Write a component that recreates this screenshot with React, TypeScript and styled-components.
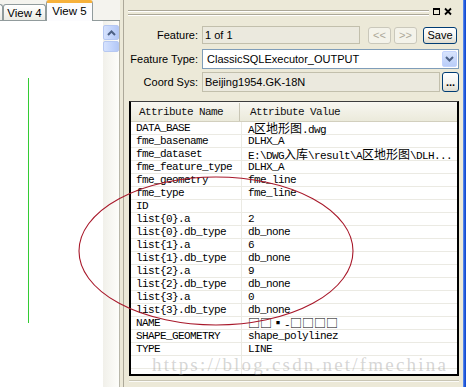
import React from "react";
import styled, { createGlobalStyle } from "styled-components";

const GlobalStyle = createGlobalStyle`
  html, body { margin: 0; padding: 0; background: #ece9d8; }
  body { width: 466px; height: 387px; overflow: hidden; }
  * { box-sizing: border-box; }
`;

const Screen = styled.div`
  position: relative;
  display: flex;
  width: 466px;
  height: 387px;
  overflow: hidden;
  background: #ece9d8;
  font-family: "Liberation Sans", Arial, sans-serif;
  font-size: 11px;
  color: #000;
`;

/* ---------- left view ---------- */
const LeftPane = styled.div`
  width: 120px;
  flex-shrink: 0;
  display: flex;
  flex-direction: column;
  background: #f4f3ee;
`;

const TabStrip = styled.div`
  height: 21px;
  flex-shrink: 0;
  display: flex;
  align-items: flex-end;
  border-bottom: 1px solid #919b9c;
`;

const Tab = styled.div<{ $active?: boolean; $w: number; $sliver?: boolean }>`
  width: ${(p) => p.$w}px;
  flex-shrink: 0;
  height: ${(p) => (p.$active ? 21 : 16)}px;
  margin-bottom: ${(p) => (p.$active ? -1 : 0)}px;
  border: 1px solid #919b9c;
  border-bottom: none;
  border-left: ${(p) => (p.$sliver ? "none" : "1px solid #919b9c")};
  border-top: ${(p) => (p.$active ? "3px solid #f6b13c" : "1px solid #919b9c")};
  border-radius: ${(p) => (p.$sliver ? "0 3px 0 0" : "3px 3px 0 0")};
  background: ${(p) => (p.$active ? "#fcfcfe" : "linear-gradient(#ffffff, #ecebe4)")};
  display: flex;
  align-items: center;
  justify-content: center;
  padding-bottom: ${(p) => (p.$active ? 3 : 0)}px;
  font-size: 11.5px;
  white-space: nowrap;
`;

const ViewBody = styled.div`
  flex: 1;
  min-height: 0;
  display: flex;
  background: #fff;
`;

const Canvas = styled.div`
  flex: 1;
  position: relative;
  overflow: hidden;
`;

const CanvasDrawing = styled.svg`
  display: block;
`;

const VScroll = styled.div`
  width: 17px;
  flex-shrink: 0;
  padding-top: 4px;
  display: flex;
  flex-direction: column;
  gap: 1px;
  background: linear-gradient(to right, #f1f0ea, #fdfdfa);
  border-right: 1px solid #b9b7aa;
`;

const ScrollPart = styled.div<{ $h: number }>`
  height: ${(p) => p.$h}px;
  border: 1px solid #b6c8f2;
  border-radius: 2px;
  background: linear-gradient(to right, #d6e2fd, #c1d3fb 60%, #b4c8f6);
  display: flex;
  align-items: center;
  justify-content: center;
`;

const Splitter = styled.div`
  width: 3px;
  flex-shrink: 0;
  background: #ece9d8;
`;

/* ---------- right panel ---------- */
const RightPane = styled.div`
  width: 340px;
  flex-shrink: 0;
  display: flex;
  flex-direction: column;
  border-left: 1px solid #aca899;
  background: #ece9d8;
`;

const TitleBar = styled.div`
  height: 22px;
  flex-shrink: 0;
  display: flex;
  align-items: flex-start;
  padding: 9px 10px 0 4px;
  gap: 2px;
`;

const Gripper = styled.div`
  flex: 1;
  margin: 1px 1px 0 0;
  display: flex;
  flex-direction: column;
  gap: 2px;
`;

const Groove = styled.div`
  height: 2px;
  border-top: 1px solid #aca899;
  border-bottom: 1px solid #ffffff;
`;

const TitleIcon = styled.svg`
  display: block;
  margin-top: -2px;
`;

const Form = styled.div`
  display: flex;
  flex-direction: column;
  padding: 4px 4px 0 0;
`;

const FormRow = styled.div<{ $gap: number }>`
  display: flex;
  align-items: center;
  margin-top: ${(p) => p.$gap}px;
`;

const Label = styled.div`
  width: 74px;
  margin-right: 4px;
  text-align: right;
  white-space: nowrap;
`;

const Field = styled.div<{ $w: number; $h: number }>`
  width: ${(p) => p.$w}px;
  height: ${(p) => p.$h}px;
  border: 1px solid #c2bfac;
  background: #ebe9de;
  padding-left: 2px;
  display: flex;
  align-items: center;
  white-space: nowrap;
  overflow: hidden;
`;

const XPButton = styled.div<{ $w: number; $h: number; $ml: number; $disabled?: boolean; $bold?: boolean }>`
  width: ${(p) => p.$w}px;
  height: ${(p) => p.$h}px;
  margin-left: ${(p) => p.$ml}px;
  border: 1px solid ${(p) => (p.$disabled ? "#cac8bb" : "#003c74")};
  border-radius: 3px;
  background: ${(p) =>
    p.$disabled ? "#f4f3ea" : "linear-gradient(#ffffff, #f4f3ee 55%, #dedbce)"};
  color: ${(p) => (p.$disabled ? "#aca899" : "#000")};
  font-weight: ${(p) => (p.$bold ? 700 : 400)};
  display: flex;
  align-items: center;
  justify-content: center;
  font-size: 11px;
  line-height: 1;
  white-space: nowrap;
`;

const Combo = styled.div`
  width: 257px;
  height: 20px;
  border: 1px solid #7f9db9;
  background: #fff;
  display: flex;
  align-items: center;
  padding-left: 4px;
`;

const ComboText = styled.div`
  flex: 1;
  white-space: nowrap;
  overflow: hidden;
`;

const DropButton = styled.div`
  width: 15px;
  height: 16px;
  margin-right: 1px;
  border: 1px solid #c3d3fd;
  border-radius: 2px;
  background: linear-gradient(#d8e4fd, #b9cdf8);
  display: flex;
  align-items: center;
  justify-content: center;
`;

/* ---------- attribute table ---------- */
const Table = styled.div`
  margin: 9px 4px 0 5px;
  height: 275px;
  flex-shrink: 0;
  border: 2px solid #000;
  border-top: 1px solid #3c3c3c;
  background: #fff;
  overflow: hidden;
  font-family: "Liberation Mono", "Noto Sans CJK SC", monospace;
  font-size: 11px;
  letter-spacing: -0.6px;
`;

const HeaderRow = styled.div`
  display: grid;
  grid-template-columns: 109px 1fr;
  height: 20px;
  border-top: 1px solid #f8f7f2;
  background: linear-gradient(#f7f6f0, #ebeadb);
  border-bottom: 1px solid #d2cfbe;
`;

const HeaderCell = styled.div<{ $pad: number; $divider?: boolean }>`
  display: flex;
  align-items: center;
  padding-left: ${(p) => p.$pad}px;
  border-right: ${(p) => (p.$divider ? "1px solid #c9c6b5" : "none")};
  white-space: nowrap;
  color: #111;
`;

const DataRow = styled.div`
  display: grid;
  grid-template-columns: 111px 1fr;
  height: 13px;
  border-bottom: 1px solid #ebeae3;
`;

const Cell = styled.div<{ $pad: number; $divider?: boolean }>`
  padding-left: ${(p) => p.$pad}px;
  border-right: ${(p) => (p.$divider ? "1px solid #ebeae3" : "none")};
  line-height: 13px;
  white-space: nowrap;
`;

const Cjk = styled.span`
  font-family: "Noto Sans CJK SC", sans-serif;
  font-size: 12px;
  letter-spacing: 0;
  line-height: 1;
`;

const BottomStrip = styled.div`
  flex: 1;
  padding: 4px 4px 0 5px;
`;

const StatusLine = styled.div`
  height: 2px;
  border-top: 1px solid #c9c6b5;
  border-bottom: 1px solid #fbfbf8;
`;

const FrameEdge = styled.div`
  width: 3px;
  flex-shrink: 0;
  background: linear-gradient(to right, #6a9af2, #2a5fdc 45%, #0b45cc);
`;

/* ---------- overlays ---------- */
const Annotation = styled.svg`
  position: absolute;
  left: 0;
  top: 0;
  pointer-events: none;
`;

const Watermark = styled.div`
  position: absolute;
  left: 152px;
  top: 355px;
  font-family: "Liberation Serif", "Times New Roman", serif;
  font-size: 19px;
  line-height: 19px;
  letter-spacing: 2.2px;
  color: rgba(150, 150, 150, 0.4);
  white-space: nowrap;
  pointer-events: none;
`;

type Row = [string, React.ReactNode];

const rows: Row[] = [
  ["DATA_BASE", <>A<Cjk>区地形图</Cjk>.dwg</>],
  ["fme_basename", "DLHX_A"],
  [
    "fme_dataset",
    <>
      {"E:\\DWG"}
      <Cjk>入库</Cjk>
      {"\\result\\A"}
      <Cjk>区地形图</Cjk>
      {"\\DLH..."}
    </>,
  ],
  ["fme_feature_type", "DLHX_A"],
  ["fme_geometry", "fme_line"],
  ["fme_type", "fme_line"],
  ["ID", ""],
  ["list{0}.a", "2"],
  ["list{0}.db_type", "db_none"],
  ["list{1}.a", "6"],
  ["list{1}.db_type", "db_none"],
  ["list{2}.a", "9"],
  ["list{2}.db_type", "db_none"],
  ["list{3}.a", "0"],
  ["list{3}.db_type", "db_none"],
  ["NAME", <><Cjk>□□▪</Cjk>-<Cjk>□□□□</Cjk></>],
  ["SHAPE_GEOMETRY", "shape_polylinez"],
  ["TYPE", "LINE"],
  ["", ""],
  ["", ""],
];

const Chevron = ({ up }: { up?: boolean }) => (
  <svg width="9" height="6" viewBox="0 0 9 6">
    <path
      d={up ? "M1 5 L4.5 1.5 L8 5" : "M1 1 L4.5 4.5 L8 1"}
      fill="none"
      stroke="#4d6185"
      strokeWidth="2"
    />
  </svg>
);

export default function App() {
  return (
    <Screen>
      <GlobalStyle />
      <LeftPane>
        <TabStrip>
          <Tab $w={3} $sliver />
          <Tab $w={43}>View 4</Tab>
          <Tab $w={47} $active>
            View 5
          </Tab>
        </TabStrip>
        <ViewBody>
          <Canvas>
            <CanvasDrawing width="103" height="366">
              <line x1="28.5" y1="57" x2="28.5" y2="302" stroke="#33cc33" strokeWidth="1" />
            </CanvasDrawing>
          </Canvas>
          <VScroll>
            <ScrollPart $h={15}>
              <Chevron up />
            </ScrollPart>
            <ScrollPart $h={11} />
          </VScroll>
        </ViewBody>
      </LeftPane>
      <Splitter />
      <RightPane>
        <TitleBar>
          <Gripper>
            <Groove />
            <Groove />
          </Gripper>
          <TitleIcon width="9" height="9" viewBox="0 0 9 9">
            <rect x="1.5" y="1.5" width="6" height="6" fill="none" stroke="#000" strokeWidth="1" />
            <rect x="1" y="1" width="7" height="2" fill="#000" />
          </TitleIcon>
          <TitleIcon width="10" height="9" viewBox="0 0 10 9">
            <path d="M2 1.5 L8 7.5 M8 1.5 L2 7.5" stroke="#000" strokeWidth="1.8" />
          </TitleIcon>
        </TitleBar>
        <Form>
          <FormRow $gap={0}>
            <Label>Feature:</Label>
            <Field $w={158} $h={18}>1 of 1</Field>
            <XPButton $w={23} $h={17} $ml={8} $disabled>
              &lt;&lt;
            </XPButton>
            <XPButton $w={23} $h={17} $ml={3} $disabled>
              &gt;&gt;
            </XPButton>
            <XPButton $w={34} $h={17} $ml={6}>
              Save
            </XPButton>
          </FormRow>
          <FormRow $gap={5}>
            <Label>Feature Type:</Label>
            <Combo>
              <ComboText>ClassicSQLExecutor_OUTPUT</ComboText>
              <DropButton>
                <Chevron />
              </DropButton>
            </Combo>
          </FormRow>
          <FormRow $gap={3}>
            <Label>Coord Sys:</Label>
            <Field $w={238} $h={20}>Beijing1954.GK-18N</Field>
            <XPButton $w={17} $h={20} $ml={2} $bold>
              ...
            </XPButton>
          </FormRow>
        </Form>
        <Table>
          <HeaderRow>
            <HeaderCell $pad={8} $divider>
              Attribute Name
            </HeaderCell>
            <HeaderCell $pad={10}>Attribute Value</HeaderCell>
          </HeaderRow>
          {rows.map(([name, value], i) => (
            <DataRow key={i}>
              <Cell $pad={5} $divider>
                {name}
              </Cell>
              <Cell $pad={6}>{value}</Cell>
            </DataRow>
          ))}
        </Table>
        <BottomStrip>
          <StatusLine />
        </BottomStrip>
      </RightPane>
      <FrameEdge />
      <Annotation width="466" height="387">
        <ellipse cx="216" cy="251" rx="137" ry="74" fill="none" stroke="#a8182a" strokeWidth="1.1" />
      </Annotation>
      <Watermark>https://blog.csdn.net/fmechina</Watermark>
    </Screen>
  );
}
